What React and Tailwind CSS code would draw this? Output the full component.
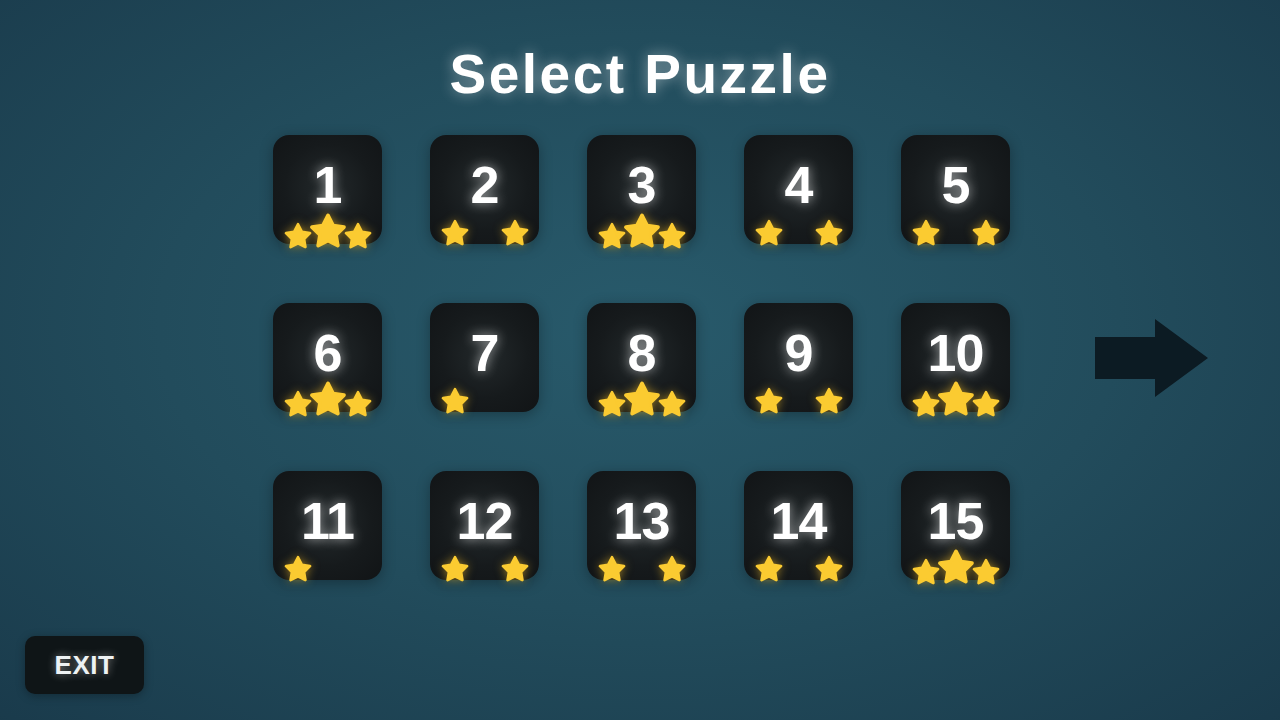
import React from 'react';

// rating per puzzle: 3 = left+centre+right, 2 = left+right, 1 = left only
const PUZZLES = [
  { n: 1, stars: 3 }, { n: 2, stars: 2 }, { n: 3, stars: 3 }, { n: 4, stars: 2 }, { n: 5, stars: 2 },
  { n: 6, stars: 3 }, { n: 7, stars: 1 }, { n: 8, stars: 3 }, { n: 9, stars: 2 }, { n: 10, stars: 3 },
  { n: 11, stars: 1 }, { n: 12, stars: 2 }, { n: 13, stars: 2 }, { n: 14, stars: 2 }, { n: 15, stars: 3 },
];

const Star = ({ size }) => (
  <svg
    width={size}
    height={size}
    viewBox="0 0 24 24"
    className="drop-shadow-[0_0_5px_rgba(255,196,40,0.55)] shrink-0"
  >
    <polygon
      points="12,2.6 15.09,8.76 21.6,9.67 16.8,14.34 17.9,20.8 12,17.77 6.1,20.8 7.2,14.34 2.4,9.67 8.91,8.76"
      fill="#fbcb31"
      stroke="#fbcb31"
      strokeWidth="2.2"
      strokeLinejoin="round"
    />
  </svg>
);

const Tile = ({ n, stars }) => {
  const left = stars >= 1;
  const mid = stars === 3;
  const right = stars >= 2;
  return (
    <div className="w-[109px] h-[109px] rounded-[16px] flex flex-col items-center bg-[radial-gradient(circle_at_50%_48%,#23292b_0%,#161a1c_55%,#111416_100%)] shadow-[0_3px_14px_rgba(0,0,0,0.3)]">
      <span className="mt-[24px] leading-none text-[52px] font-bold tracking-[-1px] text-white [text-shadow:0_0_12px_rgba(255,255,255,0.6)]">
        {n}
      </span>
      <div className="mt-auto mb-[-4px] flex items-end">
        <div className="w-[30px] flex justify-center">{left && <Star size={30} />}</div>
        <div className="w-[30px] flex justify-center">{mid && <Star size={40} />}</div>
        <div className="w-[30px] flex justify-center">{right && <Star size={30} />}</div>
      </div>
    </div>
  );
};

export default function App() {
  return (
    <div className="w-full h-[720px] overflow-hidden flex flex-col items-center bg-[radial-gradient(ellipse_75%_80%_at_50%_45%,#285a6b_0%,#224c5c_50%,#19394a_100%)] font-['Liberation_Sans',Arial,sans-serif]">
      {/* ── TITLE ── */}
      <h1 className="pt-[47px] leading-none text-[55px] font-bold tracking-[2.5px] text-white [text-shadow:0_0_14px_rgba(255,255,255,0.45)]">
        Select Puzzle
      </h1>

      {/* ── GRID + NEXT ARROW ── */}
      <div className="mt-[33px] flex items-center gap-[85px]">
        <div className="w-[116px]" />
        <div className="grid grid-cols-5 gap-x-[48px] gap-y-[59px]">
          {PUZZLES.map(p => (
            <Tile key={p.n} n={p.n} stars={p.stars} />
          ))}
        </div>
        <button className="w-[113px] h-[78px]">
          <svg width="113" height="78" viewBox="0 0 113 78">
            <polygon points="0,18 60,18 60,0 113,39 60,78 60,60 0,60" fill="#0c1b23" />
          </svg>
        </button>
      </div>

      {/* ── EXIT ── */}
      <button className="self-start ml-[25px] mt-[56px] w-[119px] h-[58px] rounded-[10px] bg-[#0f1517] flex items-center justify-center shadow-[0_2px_10px_rgba(0,0,0,0.3)]">
        <span className="text-[26px] font-bold tracking-[0.5px] text-[#eef2f3] leading-none [text-shadow:0_0_8px_rgba(255,255,255,0.45)]">
          EXIT
        </span>
      </button>
    </div>
  );
}
